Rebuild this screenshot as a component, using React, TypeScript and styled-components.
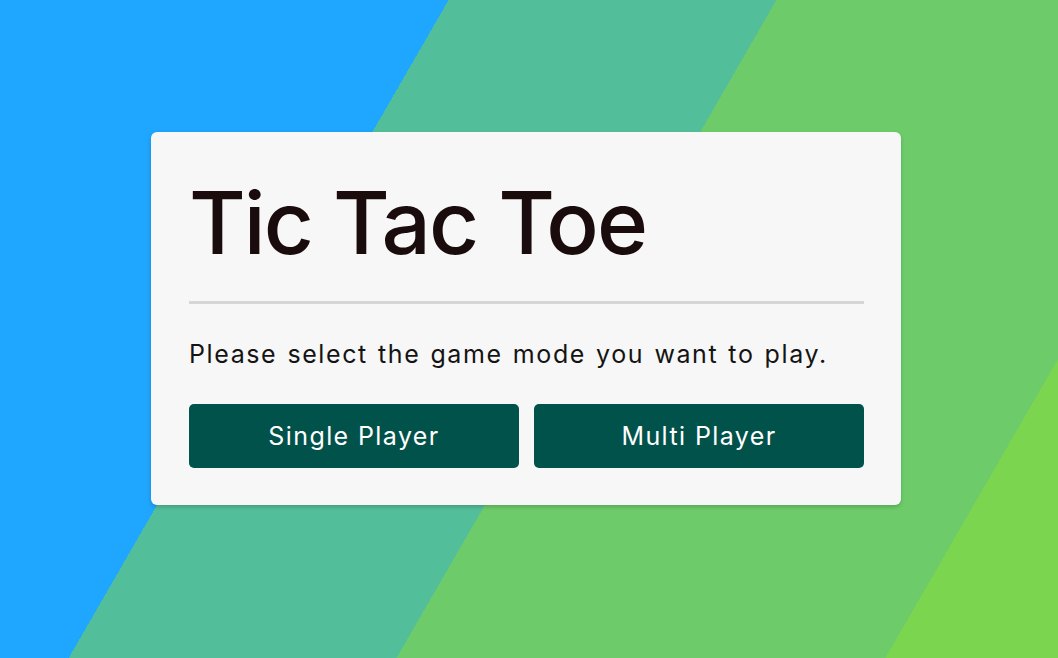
import React from "react";
import styled, { createGlobalStyle } from "styled-components";

const GlobalStyle = createGlobalStyle`
  html, body {
    margin: 0;
    padding: 0;
    height: 100%;
  }
  body {
    font-family: "Inter", "Liberation Sans", sans-serif;
    background: linear-gradient(
      120deg,
      #1fa6fe 0%,
      #1fa6fe 31.2%,
      #52bf9a 31.2%,
      #52bf9a 54%,
      #6dcc69 54%,
      #6dcc69 88%,
      #7bd54e 88%,
      #7bd54e 100%
    );
    min-height: 100vh;
    overflow: hidden;
  }
`;

const Page = styled.main`
  display: flex;
  justify-content: center;
  align-items: flex-start;
  min-height: 100vh;
  box-sizing: border-box;
  padding: 132px 6px 0 0;
`;

const Card = styled.section`
  width: 750px;
  box-sizing: border-box;
  background: #f7f7f7;
  border-radius: 6px;
  padding: 31px 37px 37px 38px;
  box-shadow: 0 2px 4px rgba(0, 0, 0, 0.18);
  display: flex;
  flex-direction: column;
`;

const Title = styled.h1`
  margin: 0;
  font-family: "Inter", sans-serif;
  font-weight: 500;
  font-size: 87px;
  line-height: 120px;
  color: #1a0c0c;
  letter-spacing: -2px;
`;

const Divider = styled.hr`
  margin: 18px 0 0 0;
  border: none;
  height: 3px;
  background: #d6d6d6;
`;

const Prompt = styled.p`
  margin: 32px 0 0 0;
  font-family: "Inter", sans-serif;
  font-size: 25px;
  line-height: 36px;
  font-weight: 400;
  color: #141414;
  letter-spacing: 1.6px;
  word-spacing: 1.5px;
`;

const ButtonRow = styled.div`
  display: grid;
  grid-template-columns: 1fr 1fr;
  gap: 15px;
  margin-top: 32px;
`;

const ModeButton = styled.button`
  height: 64px;
  border: none;
  border-radius: 5px;
  background: #01524a;
  color: #ffffff;
  font-family: "Inter", sans-serif;
  font-size: 25px;
  font-weight: 400;
  letter-spacing: 1.4px;
  cursor: pointer;
`;

export default function App() {
  return (
    <>
      <GlobalStyle />
      <Page>
        <Card>
          <Title>Tic Tac Toe</Title>
          <Divider />
          <Prompt>Please select the game mode you want to play.</Prompt>
          <ButtonRow>
            <ModeButton>Single Player</ModeButton>
            <ModeButton>Multi Player</ModeButton>
          </ButtonRow>
        </Card>
      </Page>
    </>
  );
}
